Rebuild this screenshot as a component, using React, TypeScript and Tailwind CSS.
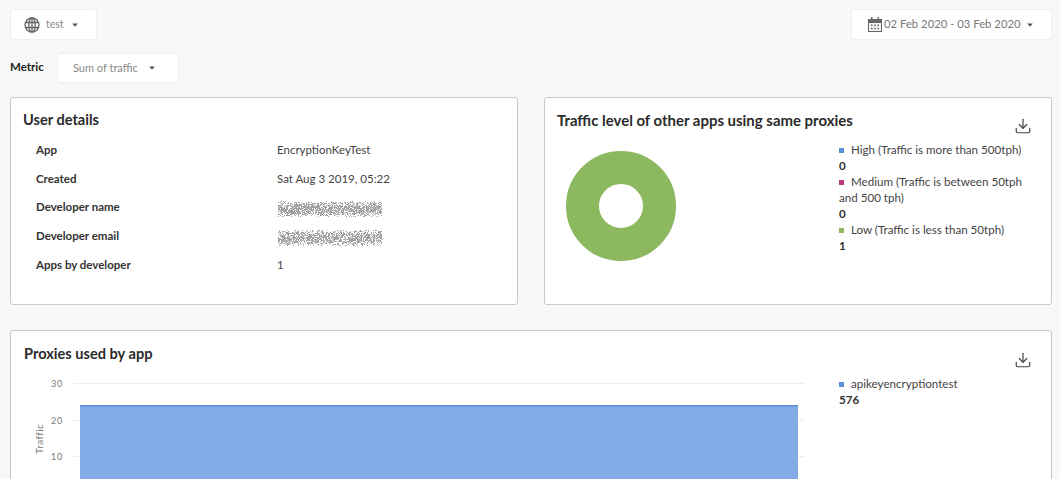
import React from "react";
import { Download } from "lucide-react";

const Caret = () => (
  <svg width="6" height="4" viewBox="0 0 7 5" className="block shrink-0">
    <path d="M0 0.5h7L3.5 4.8z" fill="#555" />
  </svg>
);

const Globe = () => (
  <svg width="16" height="16" viewBox="0 0 16 16" fill="none" stroke="#666" strokeWidth="1.3" className="shrink-0">
    <circle cx="8" cy="8" r="7" />
    <ellipse cx="8" cy="8" rx="3.2" ry="7" />
    <path d="M1.3 5.5h13.4M1.3 10.5h13.4M8 1v14" />
  </svg>
);

const Calendar = () => (
  <svg width="14" height="15" viewBox="0 0 14 15" className="shrink-0">
    <path d="M0 2h14v13H0z" fill="#666" />
    <path d="M1 6h12v8H1z" fill="#f2f2f2" />
    <path d="M3 0h1.5v3H3zM9.5 0H11v3H9.5z" fill="#666" />
    <path d="M3 7.5h1.5V9H3zM6.2 7.5h1.5V9H6.2zM9.5 7.5H11V9H9.5zM3 10.8h1.5v1.5H3zM6.2 10.8h1.5v1.5H6.2zM9.5 10.8H11v1.5H9.5z" fill="#666" />
  </svg>
);

// redacted text, speckled grey band
const Scribble = ({ seed }: { seed: number }) => {
  const dots: React.ReactNode[] = [];
  let r = seed;
  for (let y = 0; y < 18; y++) {
    for (let x = 0; x < 104; x++) {
      r = (r * 1103515245 + 12345) & 0x7fffffff;
      const edge = Math.abs(y - 8.5) / 9;
      if ((r >> 8) % 100 < 100 - edge * edge * 90 - 22) {
        dots.push(<rect key={`${x}-${y}`} x={x} y={y} width="1" height="1" fill={(r >> 16) % 3 === 0 ? "#b8b8b8" : "#a0a0a0"} />);
      }
    }
  }
  return (
    <svg width="104" height="18" viewBox="0 0 104 18" className="ml-[1px] mt-[5px] block">
      {dots}
    </svg>
  );
};

const rows: { label: string; value: React.ReactNode }[] = [
  { label: "App", value: "EncryptionKeyTest" },
  { label: "Created", value: "Sat Aug 3 2019, 05:22" },
  { label: "Developer name", value: <Scribble seed={7} /> },
  { label: "Developer email", value: <Scribble seed={91} /> },
  { label: "Apps by developer", value: "1" },
];

const LegendItem = ({ color, label, value }: { color: string; label: string; value: string }) => (
  <div>
    <p className="text-[11.6px] leading-4 text-[#444]">
      <span className={`mr-[7px] mb-[1px] inline-block size-[5px] ${color}`} />
      {label}
    </p>
    <p className="text-[11.6px] font-bold leading-4 text-[#333]">{value}</p>
  </div>
);

const TrafficChart = () => (
  <svg width="790" height="110" viewBox="0 0 790 110" className="block">
    <text x="19" y="76" transform="rotate(-90 19 76)" fontSize="10" fill="#777" letterSpacing="0.4">
      Traffic
    </text>
    {[
      { y: 5, t: "30" },
      { y: 42, t: "20" },
      { y: 78, t: "10" },
    ].map((g) => (
      <g key={g.t}>
        <line x1="49" x2="781" y1={g.y + 0.5} y2={g.y + 0.5} stroke="#eeeeee" />
        <text x="27" y={g.y + 4} fontSize="9" fill="#777" letterSpacing="0.8">
          {g.t}
        </text>
      </g>
    ))}
    <rect x="56" y="27" width="718" height="83" fill="#83abe6" />
    <rect x="56" y="27" width="718" height="1.5" fill="#5f8fdb" />
  </svg>
);

const App: React.FC = () => {
  return (
    <div className="h-[479px] overflow-hidden bg-[#f7f9f8] pl-[10px] pr-[8px] pt-[9px] font-['Lato',sans-serif]">
      {/* Top bar */}
      <div className="flex justify-between">
        <div className="flex h-[31px] w-[87px] items-center rounded-[3px] border border-[#f0f0f0] bg-white pl-[13px]">
          <Globe />
          <span className="ml-[6px] text-[10.5px] text-[#888]">test</span>
          <span className="ml-[8px]"><Caret /></span>
        </div>
        <div className="flex h-[31px] w-[201px] items-center border border-[#f0f0f0] bg-white pl-4">
          <Calendar />
          <span className="ml-[2px] text-[11.3px] text-[#777]">02 Feb 2020 - 03 Feb 2020</span>
          <span className="ml-[6px]"><Caret /></span>
        </div>
      </div>

      {/* Metric */}
      <div className="mt-[13px] flex items-center">
        <span className="w-[47px] pb-[2px] text-[11.5px] font-bold text-[#222]">Metric</span>
        <div className="flex h-[30px] w-[122px] items-center rounded-[3px] border border-[#f0f0f0] bg-white pl-[15px]">
          <span className="pt-[1px] text-[11px] text-[#888]">Sum of traffic</span>
          <span className="ml-[11px]"><Caret /></span>
        </div>
      </div>

      {/* Cards */}
      <div className="mt-[14px] grid grid-cols-[508px_508px] gap-[26px]">
        <section className="h-[208px] rounded-[3px] border border-[#c8c8c8] bg-white pl-[12px] pt-[13px]">
          <h2 className="text-[14.6px] font-bold leading-[18px] text-[#2b2b2b]">User details</h2>
          <div className="mt-[6px] pl-[13px]">
            {rows.map((row) => (
              <div key={row.label} className="flex h-[28.75px] items-center">
                <span className="w-[241px] text-[11.5px] font-bold text-[#333]">{row.label}</span>
                <span className="text-[11.5px] text-[#444]">{row.value}</span>
              </div>
            ))}
          </div>
        </section>

        <section className="relative h-[208px] rounded-[3px] border border-[#c8c8c8] bg-white pl-[12px] pt-[13px]">
          <h2 className="text-[14.95px] font-bold leading-[18px] text-[#2b2b2b]">Traffic level of other apps using same proxies</h2>
          <Download size={18} strokeWidth={1.6} color="#444" className="absolute right-[19px] top-[19px]" />
          <div className="flex">
            <svg width="110" height="110" viewBox="0 0 110 110" className="ml-[9px] mt-[22px] shrink-0">
              <circle cx="55" cy="55" r="38.5" fill="none" stroke="#8cb860" strokeWidth="33" />
            </svg>
            <div className="ml-[163px] mt-[13px] w-[195px]">
              <LegendItem color="bg-[#5b8fdc]" label="High (Traffic is more than 500tph)" value="0" />
              <LegendItem color="bg-[#b93a74]" label="Medium (Traffic is between 50tph and 500 tph)" value="0" />
              <LegendItem color="bg-[#8cb860]" label="Low (Traffic is less than 50tph)" value="1" />
            </div>
          </div>
        </section>
      </div>

      <section className="relative mt-[25px] h-[200px] rounded-[3px] border border-[#c8c8c8] bg-white pl-[13px] pt-[14px]">
        <h2 className="text-[14.6px] font-bold leading-[18px] text-[#2b2b2b]">Proxies used by app</h2>
        <Download size={18} strokeWidth={1.6} color="#444" className="absolute right-[19px] top-[20px]" />
        <div className="mt-[15px] flex">
          <TrafficChart />
          <div className="ml-[25px] mt-[-2px]">
            <LegendItem color="bg-[#5b8fdc]" label="apikeyencryptiontest" value="576" />
          </div>
        </div>
      </section>
    </div>
  );
};

export default App;
